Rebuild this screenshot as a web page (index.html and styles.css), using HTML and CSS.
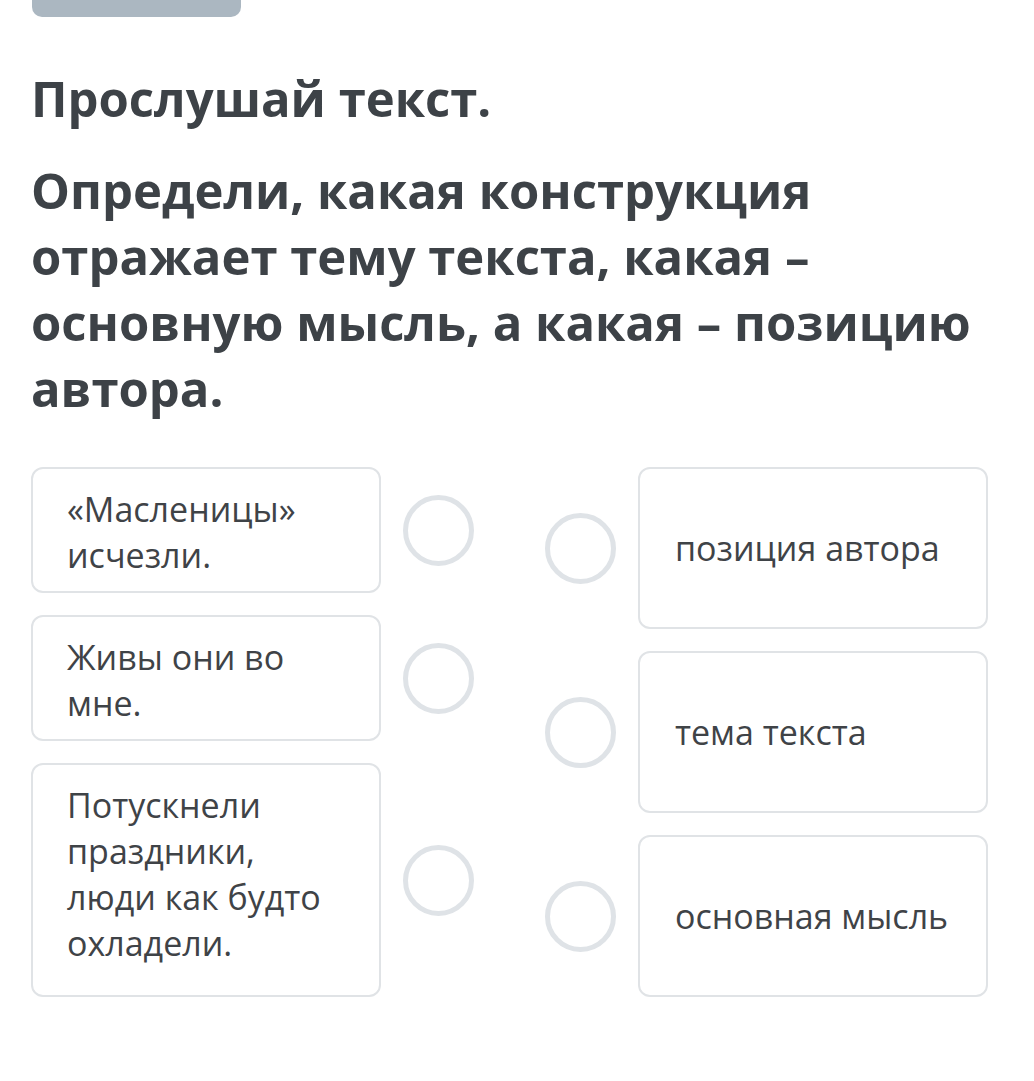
FILE: index.html
```html
<!DOCTYPE html>
<html lang="ru">
<head>
<meta charset="utf-8">
<link rel="stylesheet" href="styles.css">
</head>
<body>
<div class="page">
  <div class="bar"></div>
  <h1 class="q">Прослушай текст.</h1>
  <h1 class="q q2">Определи, какая конструкция отражает тему текста, какая – основную мысль, а какая – позицию автора.</h1>
  <div class="match">
    <div class="col">
      <div class="row">
        <div class="card">«Масленицы» исчезли.</div>
        <div class="circle"></div>
      </div>
      <div class="row">
        <div class="card">Живы они во мне.</div>
        <div class="circle"></div>
      </div>
      <div class="row grow">
        <div class="card">Потускнели праздники, люди как будто охладели.</div>
        <div class="circle"></div>
      </div>
    </div>
    <div class="col">
      <div class="row">
        <div class="circle"></div>
        <div class="card right">позиция автора</div>
      </div>
      <div class="row">
        <div class="circle"></div>
        <div class="card right">тема текста</div>
      </div>
      <div class="row">
        <div class="circle"></div>
        <div class="card right">основная мысль</div>
      </div>
    </div>
  </div>
</div>
</body>
</html>
```
FILE: styles.css
```css
html, body {
  margin: 0;
  background: #ffffff;
}
body {
  font-family: "Open Sans", "Noto Sans", sans-serif;
  color: #3d4246;
}
.page {
  padding: 0 47px 0 31px;
}
.bar {
  width: 209px;
  height: 17px;
  margin-left: 1px;
  background: #abb7c1;
  border-radius: 0 0 10px 10px;
}
.q {
  font-size: 49px;
  line-height: 66px;
  font-weight: 700;
  margin: 48px 0 0;
  color: #3d4247;
}
.q2 {
  margin-top: 26px;
}
.match {
  display: grid;
  grid-template-columns: 441px 442px;
  column-gap: 73px;
  margin-top: 46px;
}
.col {
  display: flex;
  flex-direction: column;
  gap: 22px;
}
.row {
  display: flex;
  align-items: center;
  gap: 22px;
}
.row.grow {
  flex: 1;
  align-items: stretch;
}
.row.grow .circle {
  align-self: center;
}
.card {
  box-sizing: border-box;
  width: 350px;
  flex: none;
  border: 2px solid #e0e3e6;
  border-radius: 12px;
  padding: 17px 30px 13px 34px;
  font-size: 34px;
  line-height: 46px;
  color: #3f4347;
}
.card.right {
  height: 162px;
  display: flex;
  align-items: center;
  padding: 0 20px 0 35px;
}
.circle {
  box-sizing: border-box;
  width: 71px;
  height: 71px;
  flex: none;
  border: 5px solid #dfe3e7;
  border-radius: 50%;
}
```
